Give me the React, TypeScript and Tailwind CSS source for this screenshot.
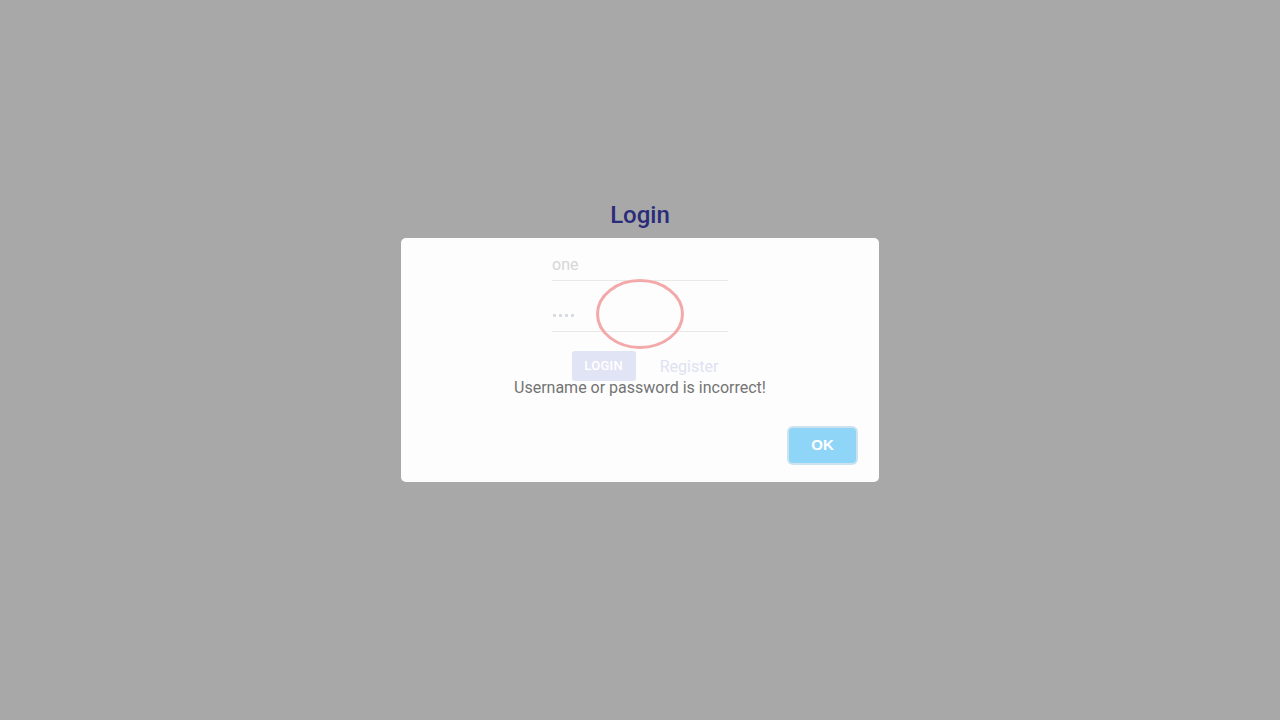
import React from "react";

export default function App() {
  return (
    <div
      className="relative w-full h-[720px] bg-[#a8a8a8] overflow-hidden"
      style={{ fontFamily: "Roboto, 'Noto Sans', sans-serif" }}
    >
      {/* modal box (overlay) */}
      <div className="absolute left-[401px] top-[238px] w-[478px] h-[244px] bg-[#fdfdfd] rounded-[5px] z-0">
        <div className="absolute left-0 right-0 top-[140px] text-center text-[16px] leading-[20px] text-[#747474] z-20">
          Username or password is incorrect!
        </div>
        <div className="absolute left-[386px] top-[188px] z-20 rounded-[6px] p-[2px] bg-[#cce2ef]">
          <button
            className="w-[67px] h-[35px] rounded-[4px] bg-[#8fd5f7] text-white font-bold text-[15px] flex items-center justify-center"
            style={{ fontFamily: "'Liberation Sans', Arial, sans-serif" }}
          >
            OK
          </button>
        </div>
      </div>

      {/* red circle (error icon) */}
      <svg className="absolute left-[595px] top-[278px] z-30" width="90" height="72" viewBox="0 0 90 72">
        <ellipse cx="45" cy="36" rx="42.5" ry="33.5" fill="none" stroke="#f3a9a9" strokeWidth="3" />
      </svg>

      {/* login page content */}
      <div className="relative z-10 flex flex-col items-center pt-[199px]">
        <h1 className="text-[24px] leading-[32px] font-medium text-[#292c7a]">Login</h1>
        <div className="mt-[17px] w-[176px] flex flex-col">
          <div className="h-[33px] border-b border-[#e8e8e8] flex items-center text-[16px] text-[#d6d6d6] pt-[1px]">
            one
          </div>
          <div className="mt-[18px] h-[33px] border-b border-[#e8e8e8] flex items-center gap-[3px] pl-[1px] pt-[1px]">
            <span className="w-[3px] h-[3px] rounded-[1px] bg-[#d5d8de]" />
            <span className="w-[3px] h-[3px] rounded-[1px] bg-[#d5d8de]" />
            <span className="w-[3px] h-[3px] rounded-[1px] bg-[#d5d8de]" />
            <span className="w-[3px] h-[3px] rounded-[1px] bg-[#d5d8de]" />
          </div>
        </div>
        <div className="mt-[19px] flex items-center gap-[24px] pl-[10px]">
          <div className="w-[64px] h-[30px] rounded-[3px] bg-[#e1e4f4] text-white text-[13px] font-medium flex items-center justify-center tracking-[0.3px]">
            LOGIN
          </div>
          <div className="text-[16px] text-[#e0e1f2] mt-[2px]">Register</div>
        </div>
      </div>
    </div>
  );
}
